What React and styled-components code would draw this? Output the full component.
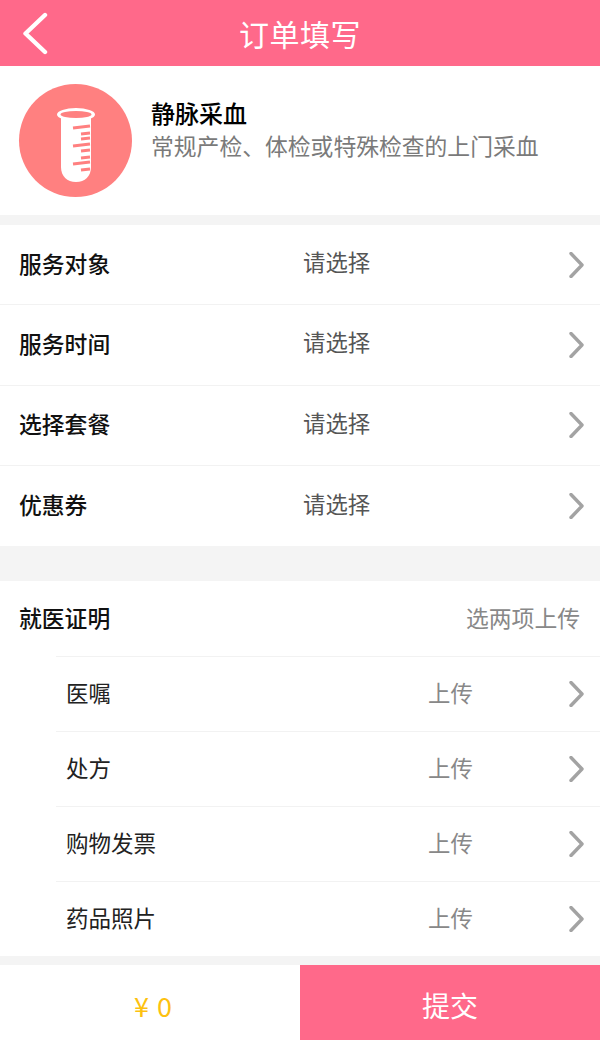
import React from 'react';
import styled, { createGlobalStyle } from 'styled-components';

const GlobalStyle = createGlobalStyle`
  html, body {
    margin: 0;
    padding: 0;
    background: #fff;
    font-family: "Noto Sans CJK SC", "Noto Sans", sans-serif;
  }
`;

const Page = styled.div`
  width: 600px;
  height: 1040px;
  display: flex;
  flex-direction: column;
  overflow: hidden;
  background: #f4f4f4;
`;

const Header = styled.header`
  height: 66px;
  flex: none;
  position: relative;
  display: flex;
  align-items: center;
  justify-content: center;
  background: #ff698a;
`;

const Title = styled.h1`
  margin: 0;
  font-size: 30px;
  font-weight: 400;
  line-height: 1;
  letter-spacing: 0.5px;
  color: #fff;
`;

const BackIcon = styled.svg`
  position: absolute;
  left: 22px;
  top: 12px;
`;

const ServiceCard = styled.section`
  height: 149px;
  flex: none;
  display: flex;
  align-items: center;
  gap: 19px;
  padding: 0 19px;
  box-sizing: border-box;
  background: #fff;
  margin-bottom: 10px;
`;

const Badge = styled.div`
  width: 113px;
  height: 113px;
  flex: none;
  display: flex;
  align-items: center;
  justify-content: center;
  padding-top: 9px;
  box-sizing: border-box;
  border-radius: 50%;
  background: #ff8080;
`;

const ServiceText = styled.div`
  display: flex;
  flex-direction: column;
  gap: 1px;
  margin-top: -22px;
`;

const ServiceName = styled.div`
  font-size: 24px;
  font-weight: 500;
  line-height: 32px;
  color: #000;
`;

const ServiceDesc = styled.div`
  font-size: 22.8px;
  line-height: 32px;
  color: #7a7a7a;
`;

const Group = styled.section`
  flex: none;
  background: #fff;
  margin-bottom: ${({ $gap }) => $gap}px;
`;

const Row = styled.div`
  height: 80.3px;
  display: flex;
  align-items: center;
  padding: 0 16px 0 19px;
  box-sizing: border-box;
  border-bottom: ${({ $last }) => ($last ? 'none' : '1px solid #f2f2f2')};
`;

const RowLabel = styled.div`
  width: 284px;
  flex: none;
  font-size: 22.8px;
  font-weight: 500;
  color: #111;
  margin-top: -3px;
`;

const RowValue = styled.div`
  flex: 1;
  font-size: 22.4px;
  color: #555;
  margin-top: -7px;
`;

const ProofHead = styled.div`
  height: 75px;
  display: flex;
  align-items: center;
  justify-content: space-between;
  padding: 2px 20px 0 19px;
  box-sizing: border-box;
`;

const ProofHint = styled.div`
  font-size: 22.8px;
  color: #888;
  margin-top: -4px;
`;

const SubRow = styled.div`
  height: 75px;
  margin-left: 56px;
  display: flex;
  align-items: center;
  padding-right: 16px;
  box-sizing: border-box;
  border-top: 1px solid #f2f2f2;
`;

const SubLabel = styled.div`
  width: 372px;
  flex: none;
  padding-left: 10px;
  box-sizing: border-box;
  font-size: 22.5px;
  color: #222;
  margin-top: -4px;
`;

const SubValue = styled.div`
  flex: 1;
  font-size: 22.4px;
  color: #888;
  margin-top: -4px;
`;

const Footer = styled.footer`
  height: 75px;
  flex: none;
  display: flex;
  margin-top: auto;
  background: #fff;
`;

const Total = styled.div`
  width: 300px;
  display: flex;
  align-items: center;
  justify-content: center;
  padding: 5px 0 0 7px;
  box-sizing: border-box;
  font-size: 27px;
  letter-spacing: 1px;
  color: #fdc110;
`;

const Submit = styled.button`
  width: 300px;
  border: 0;
  padding: 4px 0 0;
  background: #ff698a;
  color: #fff;
  font: inherit;
  font-size: 28px;
`;

const Chevron = () => (
  <svg width="17" height="26" viewBox="0 0 17 26" fill="none">
    <path d="M4 1.5 L15 13 L4 24.5" stroke="#a3a3a3" strokeWidth="3.4" strokeLinecap="round" strokeLinejoin="round" />
  </svg>
);

const Tube = () => (
  <svg width="38" height="74" viewBox="0 0 38 74" fill="none">
    <path d="M4 6 V59 C4 68 10 74 19 74 C28 74 34 68 34 59 V6 Z" fill="#fff" />
    <ellipse cx="19" cy="6.5" rx="19" ry="6.5" fill="#fff" />
    <ellipse cx="19" cy="6.5" rx="15.5" ry="3.4" fill="#ff8080" />
    <g stroke="#ff8080" strokeWidth="2.8">
      <path d="M16 20 L33 18" />
      <path d="M24 26 L33 25" />
      <path d="M24 31 L33 30" />
      <path d="M16 38 L33 36" />
      <path d="M24 43 L33 42" />
      <path d="M24 50 L33 49" />
      <path d="M16 56 L33 54" />
      <path d="M24 62 L33 61" />
    </g>
  </svg>
);

const mainRows = ['服务对象', '服务时间', '选择套餐', '优惠券'];
const proofRows = ['医嘱', '处方', '购物发票', '药品照片'];

export default function App() {
  return (
    <Page>
      <GlobalStyle />
      <Header>
        <BackIcon width="28" height="44" viewBox="0 0 28 44" fill="none">
          <path d="M23 3 L3.5 21.5 L23 40" stroke="#fff" strokeWidth="4.4" strokeLinecap="round" strokeLinejoin="round" />
        </BackIcon>
        <Title>订单填写</Title>
      </Header>
      <ServiceCard>
        <Badge>
          <Tube />
        </Badge>
        <ServiceText>
          <ServiceName>静脉采血</ServiceName>
          <ServiceDesc>常规产检、体检或特殊检查的上门采血</ServiceDesc>
        </ServiceText>
      </ServiceCard>
      <Group $gap={34.8}>
        {mainRows.map((label, i) => (
          <Row key={label} $last={i === mainRows.length - 1}>
            <RowLabel>{label}</RowLabel>
            <RowValue>请选择</RowValue>
            <Chevron />
          </Row>
        ))}
      </Group>
      <Group $gap={0}>
        <ProofHead>
          <RowLabel>就医证明</RowLabel>
          <ProofHint>选两项上传</ProofHint>
        </ProofHead>
        {proofRows.map((label) => (
          <SubRow key={label}>
            <SubLabel>{label}</SubLabel>
            <SubValue>上传</SubValue>
            <Chevron />
          </SubRow>
        ))}
      </Group>
      <Footer>
        <Total>¥ 0</Total>
        <Submit>提交</Submit>
      </Footer>
    </Page>
  );
}
